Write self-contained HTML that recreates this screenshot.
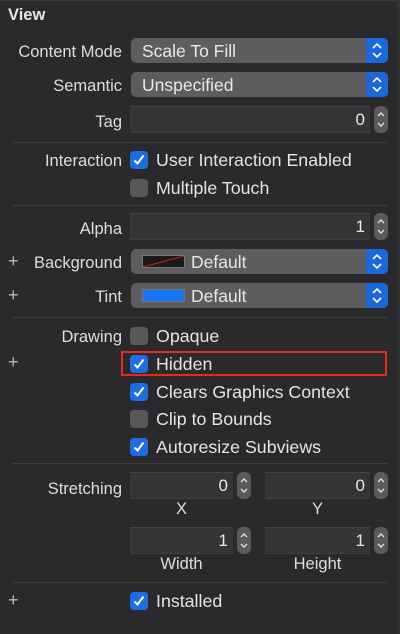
<!DOCTYPE html>
<html><head><meta charset="utf-8"><style>
*{margin:0;padding:0;box-sizing:border-box}
body{width:400px;height:634px;background:#2a2a2c;font-family:"Liberation Sans",sans-serif;color:#dedede;font-size:16.5px;position:relative;overflow:hidden}
.a{position:absolute}
.lbl{position:absolute;right:278px;text-align:right;white-space:nowrap;margin-top:2px}
.pop{position:absolute;left:131px;width:257px;height:25px;background:#5d5d60;border-radius:5px;overflow:hidden}
.pop .t{position:absolute;left:11px;top:3px;font-size:17.5px;color:#e8e8e8}
.pop .b{position:absolute;right:0;top:0;width:22px;height:25px;background:#1a68dc}
.fld{position:absolute;height:27px;background:#353537;border-top:1px solid #444;border-bottom:1px solid #3e3e40;text-align:right;padding-right:5px;font-size:17px;line-height:26px;color:#e8e8e8}
.stp{position:absolute;width:14px;height:27px;background:#5a5a5d;border-radius:6px}
.cb{position:absolute;left:130px;width:18px;height:18px;border-radius:4px;background:#58585b}
.cb.on{background:#1e6ee3}
.ct{position:absolute;left:156px;font-size:17.8px;white-space:nowrap;color:#e4e4e4}
.sep{position:absolute;left:12px;right:12px;height:1px;background:#3e3e40}
.plus{position:absolute;left:8px;font-size:18px;color:#bbb}
.sm{position:absolute;font-size:16.5px;text-align:center;margin-top:2px}
</style></head><body>
<div class="a" style="left:0;top:0;width:400px;height:1px;background:#3a3a3c"></div>
<div class="a" style="right:0;top:0;width:3px;height:634px;background:#323234"></div>
<div class="a" style="left:8px;top:6px;font-weight:bold;font-size:16.5px;color:#e6e6e6">View</div>

<div class="lbl" style="top:41px">Content Mode</div>
<div class="pop" style="top:38px"><div class="t">Scale To Fill</div><div class="b"><svg width="22" height="25"><path d="M7 10l4-4 4 4M7 15l4 4 4-4" stroke="#fff" stroke-width="1.6" fill="none"/></svg></div></div>
<div class="lbl" style="top:75px">Semantic</div>
<div class="pop" style="top:72px"><div class="t">Unspecified</div><div class="b"><svg width="22" height="25"><path d="M7 10l4-4 4 4M7 15l4 4 4-4" stroke="#fff" stroke-width="1.6" fill="none"/></svg></div></div>
<div class="lbl" style="top:111px">Tag</div>
<div class="fld" style="left:130px;top:106px;width:240px">0</div>
<div class="stp" style="left:374px;top:106px"><svg width="14" height="27"><path d="M4 10l3-3 3 3M4 17l3 3 3-3" stroke="#ddd" stroke-width="1.4" fill="none"/></svg></div>

<div class="sep" style="top:142px"></div>
<div class="lbl" style="top:150px">Interaction</div>
<div class="cb on" style="top:151px"><svg width="18" height="18"><path d="M4.5 9.5l3 3 6-8" stroke="#fff" stroke-width="2" fill="none"/></svg></div>
<div class="ct" style="top:150px">User Interaction Enabled</div>
<div class="cb" style="top:179px"></div>
<div class="ct" style="top:178px">Multiple Touch</div>

<div class="sep" style="top:205px"></div>
<div class="lbl" style="top:218px">Alpha</div>
<div class="fld" style="left:130px;top:213px;width:240px">1</div>
<div class="stp" style="left:374px;top:213px"><svg width="14" height="27"><path d="M4 10l3-3 3 3M4 17l3 3 3-3" stroke="#ddd" stroke-width="1.4" fill="none"/></svg></div>

<div class="plus" style="top:251px">+</div>
<div class="lbl" style="top:252px">Background</div>
<div class="pop" style="top:249px"><div class="a" style="left:11px;top:6px;width:43px;height:13px;background:#1a1a1a;border:1px solid #777"><svg class="a" style="left:0;top:0" width="41" height="11"><path d="M0 11L41 0" stroke="#c22" stroke-width="1"/></svg></div><div class="t" style="left:60px">Default</div><div class="b"><svg width="22" height="25"><path d="M7 10l4-4 4 4M7 15l4 4 4-4" stroke="#fff" stroke-width="1.6" fill="none"/></svg></div></div>
<div class="plus" style="top:285px">+</div>
<div class="lbl" style="top:286px">Tint</div>
<div class="pop" style="top:283px"><div class="a" style="left:11px;top:6px;width:43px;height:13px;background:#1476f2;border:1px solid #777"></div><div class="t" style="left:60px">Default</div><div class="b"><svg width="22" height="25"><path d="M7 10l4-4 4 4M7 15l4 4 4-4" stroke="#fff" stroke-width="1.6" fill="none"/></svg></div></div>

<div class="sep" style="top:317px"></div>
<div class="lbl" style="top:326px">Drawing</div>
<div class="cb" style="top:327px"></div>
<div class="ct" style="top:326px">Opaque</div>
<div class="plus" style="top:352px">+</div>
<div class="a" style="left:121px;top:351px;width:266px;height:25px;border:2px solid #e8291c"></div>
<div class="cb on" style="top:355px"><svg width="18" height="18"><path d="M4.5 9.5l3 3 6-8" stroke="#fff" stroke-width="2" fill="none"/></svg></div>
<div class="ct" style="top:354px">Hidden</div>
<div class="cb on" style="top:383px"><svg width="18" height="18"><path d="M4.5 9.5l3 3 6-8" stroke="#fff" stroke-width="2" fill="none"/></svg></div>
<div class="ct" style="top:382px">Clears Graphics Context</div>
<div class="cb" style="top:410px"></div>
<div class="ct" style="top:409px">Clip to Bounds</div>
<div class="cb on" style="top:438px"><svg width="18" height="18"><path d="M4.5 9.5l3 3 6-8" stroke="#fff" stroke-width="2" fill="none"/></svg></div>
<div class="ct" style="top:437px">Autoresize Subviews</div>

<div class="sep" style="top:463px"></div>
<div class="lbl" style="top:478px">Stretching</div>
<div class="fld" style="left:130px;top:472px;width:103px">0</div>
<div class="stp" style="left:237px;top:472px"><svg width="14" height="27"><path d="M4 10l3-3 3 3M4 17l3 3 3-3" stroke="#ddd" stroke-width="1.4" fill="none"/></svg></div>
<div class="fld" style="left:265px;top:472px;width:105px">0</div>
<div class="stp" style="left:374px;top:472px"><svg width="14" height="27"><path d="M4 10l3-3 3 3M4 17l3 3 3-3" stroke="#ddd" stroke-width="1.4" fill="none"/></svg></div>
<div class="sm" style="left:130px;width:103px;top:498px">X</div>
<div class="sm" style="left:265px;width:105px;top:498px">Y</div>
<div class="fld" style="left:130px;top:527px;width:103px">1</div>
<div class="stp" style="left:237px;top:527px"><svg width="14" height="27"><path d="M4 10l3-3 3 3M4 17l3 3 3-3" stroke="#ddd" stroke-width="1.4" fill="none"/></svg></div>
<div class="fld" style="left:265px;top:527px;width:105px">1</div>
<div class="stp" style="left:374px;top:527px"><svg width="14" height="27"><path d="M4 10l3-3 3 3M4 17l3 3 3-3" stroke="#ddd" stroke-width="1.4" fill="none"/></svg></div>
<div class="sm" style="left:130px;width:103px;top:553px">Width</div>
<div class="sm" style="left:265px;width:105px;top:553px">Height</div>

<div class="sep" style="top:582px"></div>
<div class="plus" style="top:590px">+</div>
<div class="cb on" style="top:592px"><svg width="18" height="18"><path d="M4.5 9.5l3 3 6-8" stroke="#fff" stroke-width="2" fill="none"/></svg></div>
<div class="ct" style="top:591px">Installed</div>
</body></html>
